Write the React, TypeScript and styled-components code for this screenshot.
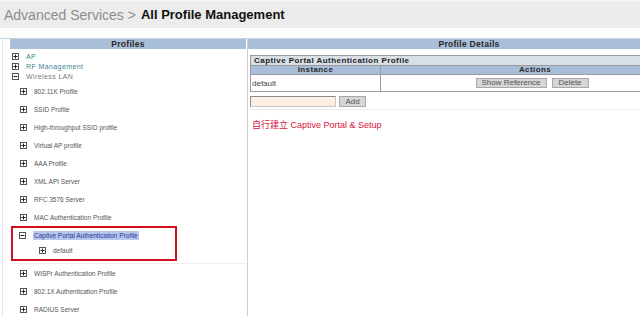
import React from 'react';
import styled, { createGlobalStyle } from 'styled-components';

const GlobalStyle = createGlobalStyle`
    html, body {
        margin: 0;
        padding: 0;
        background: #fff;
        overflow: hidden;
    }
    body {
        width: 640px;
        height: 316px;
        font-family: "Liberation Sans", Arial, sans-serif;
    }
`;

const Page = styled.div`
    width: 640px;
    height: 316px;
    overflow: hidden;
`;

const TitleBar = styled.header`
    height: 27px;
    background: #ececec;
    border-top: 1px solid #f4f4f4;
    display: flex;
    align-items: center;
    padding-left: 4px;
    white-space: nowrap;
`;

const Crumb = styled.span`
    font-size: 14px;
    color: #8c8c8c;
    margin-right: 5px;
`;

const Current = styled.span`
    font-size: 13px;
    font-weight: bold;
    color: #111;
`;

const Content = styled.div`
    padding-top: 10px;
    background: #fdfdfb;
`;

const Columns = styled.div`
    display: grid;
    grid-template-columns: 247px 393px;
    border-top: 1px solid #c8d4dc;
    background: #fff;
    height: 277px;
`;

const LeftPanel = styled.section`
    margin-left: 2px;
    border-left: 1px solid #e2e2e2;
    padding: 0 1px 0 7px;
`;

// the details panel is wider than the window, the page cuts it off on the right
const RightPanel = styled.section`
    border-left: 1px solid #cfcfcf;
    overflow: hidden;
`;

const PanelHeader = styled.div<{ $width?: number }>`
    width: ${p => (p.$width ? `${p.$width}px` : 'auto')};
    height: 10px;
    line-height: 10px;
    background: #a9bed8;
    color: #2a2a2a;
    font-size: 8.5px;
    font-weight: bold;
    letter-spacing: 0.3px;
    text-align: center;
`;

const Tree = styled.ul`
    list-style: none;
    margin: 0;
    padding: 2px 0 0;
`;

const Row = styled.li<{ $indent: number; $height: number }>`
    display: flex;
    align-items: center;
    gap: 7px;
    height: ${p => p.$height}px;
    padding-left: ${p => p.$indent}px;
    font-size: 6.5px;
    white-space: nowrap;
`;

const Label = styled.span<{ $tone: 'link' | 'muted' | 'plain' | 'selected' }>`
    color: ${p =>
        p.$tone === 'link' ? '#3c8492' :
        p.$tone === 'muted' ? '#7a7a7a' :
        p.$tone === 'selected' ? '#24369a' : '#555'};
    background: ${p => (p.$tone === 'selected' ? '#b9c7ec' : 'transparent')};
    padding: ${p => (p.$tone === 'selected' ? '1px 1px' : '0')};
    font-size: ${p => (p.$tone === 'link' || p.$tone === 'muted' ? 7 : 6.5)}px;
    letter-spacing: ${p => (p.$tone === 'link' || p.$tone === 'muted' ? 0.4 : 0)}px;
`;

const Callout = styled.div`
    width: 166px;
    box-sizing: border-box;
    margin: 0 0 2px 1px;
    border: 2px solid #d10f1f;
    padding-left: 6px;
`;

const GroupLine = styled.li`
    border-bottom: 1px solid #eeeeee;
`;

const Nested = styled.ul`
    list-style: none;
    margin: 0;
    padding: 0;
`;

const Toggle = ({ open }: { open: boolean }) => (
    <svg width="7" height="7" viewBox="0 0 7 7">
        <rect x="0.5" y="0.5" width="6" height="6" fill="#fff" stroke="#555" />
        <line x1="1.5" y1="3.5" x2="5.5" y2="3.5" stroke="#222" />
        {!open && <line x1="3.5" y1="1.5" x2="3.5" y2="5.5" stroke="#222" />}
    </svg>
);

const Details = styled.div`
    padding: 6px 0 0 2px;
`;

const ProfileTable = styled.table`
    width: 440px;
    border-collapse: collapse;
    font-size: 8px;
    color: #333;
`;

const Caption = styled.th`
    background: #d8dfe7;
    border: 1px solid #9a9a9a;
    height: 9px;
    padding: 0 3px;
    text-align: left;
    font-size: 8px;
    letter-spacing: 0.45px;
    color: #222;
    line-height: 9px;
`;

const HeadCell = styled.th<{ $width?: number }>`
    background: #a9bed8;
    border: 1px solid #9a9a9a;
    height: 8px;
    padding: 0;
    line-height: 8px;
    font-size: 8px;
    letter-spacing: 0.4px;
    color: #2a2a2a;
    width: ${p => (p.$width ? `${p.$width}px` : 'auto')};
`;

const Cell = styled.td<{ $center?: boolean }>`
    border: 1px solid #9a9a9a;
    height: 16px;
    padding: 0 1px;
    text-align: ${p => (p.$center ? 'center' : 'left')};
    color: #444;
`;

const Actions = styled.div`
    display: inline-flex;
    gap: 5px;
    margin-left: -6px;
`;

const Button = styled.button<{ $width: number; $height?: number }>`
    width: ${p => p.$width}px;
    height: ${p => p.$height ?? 10}px;
    padding: 0;
    font-family: "Liberation Sans", Arial, sans-serif;
    font-size: 8px;
    line-height: 8px;
    color: #555;
    background: #d6d6d6;
    border: 1px solid #a8a8a8;
    border-radius: 0;
`;

const AddRow = styled.div`
    display: flex;
    align-items: center;
    gap: 3px;
    padding: 4px 0 2px;
    border-bottom: 1px solid #eeeeee;
    width: 440px;
`;

const NameInput = styled.input`
    width: 86px;
    height: 11px;
    box-sizing: border-box;
    background: #fdeee2;
    border: 1px solid #8a8a8a;
    border-right-color: #c8c8c8;
    border-bottom-color: #c8c8c8;
    padding: 0;
`;

const Note = styled.p`
    margin: 8px 0 0 2px;
    font-size: 9px;
    color: #d4163a;
    font-family: "Liberation Sans", "Noto Sans CJK TC", sans-serif;
`;

type Tone = 'link' | 'muted' | 'plain' | 'selected';
type Item = { label: string; open?: boolean; tone: Tone };

const topItems: Item[] = [
    { label: 'AP', tone: 'link' },
    { label: 'RF Management', tone: 'link' },
    { label: 'Wireless LAN', open: true, tone: 'muted' },
];

const wlanItems: Item[] = [
    '802.11K Profile', 'SSID Profile', 'High-throughput SSID profile', 'Virtual AP profile',
    'AAA Profile', 'XML API Server', 'RFC 3576 Server', 'MAC Authentication Profile',
].map(label => ({ label, tone: 'plain' as const }));

const afterItems: Item[] = [
    'WISPr Authentication Profile', '802.1X Authentication Profile', 'RADIUS Server',
].map(label => ({ label, tone: 'plain' as const }));

const TreeRow = ({ item, height, indent }: { item: Item; height: number; indent: number }) => (
    <Row $indent={indent} $height={height}>
        <Toggle open={!!item.open} />
        <Label $tone={item.tone}>{item.label}</Label>
    </Row>
);

export default function App() {
    return (
        <Page>
            <GlobalStyle />
            <TitleBar>
                <Crumb>Advanced Services &gt;</Crumb>
                <Current>All Profile Management</Current>
            </TitleBar>
            <Content>
                <Columns>
                    <LeftPanel>
                        <PanelHeader>Profiles</PanelHeader>
                        <Tree>
                            {topItems.map(item => <TreeRow key={item.label} item={item} height={10} indent={2} />)}
                            <li style={{ height: 1 }} />
                            {wlanItems.map(item => <TreeRow key={item.label} item={item} height={18} indent={10} />)}
                            <GroupLine>
                                <Callout>
                                    <Nested>
                                        <TreeRow item={{ label: 'Captive Portal Authentication Profile', open: true, tone: 'selected' }} height={14} indent={0} />
                                        <TreeRow item={{ label: 'default', tone: 'plain' }} height={17} indent={20} />
                                    </Nested>
                                </Callout>
                            </GroupLine>
                            {afterItems.map(item => <TreeRow key={item.label} item={item} height={18} indent={10} />)}
                        </Tree>
                    </LeftPanel>
                    <RightPanel>
                        <PanelHeader $width={442}>Profile Details</PanelHeader>
                        <Details>
                            <ProfileTable>
                                <thead>
                                    <tr><Caption colSpan={2}>Captive Portal Authentication Profile</Caption></tr>
                                    <tr>
                                        <HeadCell $width={129}>Instance</HeadCell>
                                        <HeadCell>Actions</HeadCell>
                                    </tr>
                                </thead>
                                <tbody>
                                    <tr>
                                        <Cell>default</Cell>
                                        <Cell $center>
                                            <Actions>
                                                <Button $width={71}>Show Reference</Button>
                                                <Button $width={37}>Delete</Button>
                                            </Actions>
                                        </Cell>
                                    </tr>
                                </tbody>
                            </ProfileTable>
                            <AddRow>
                                <NameInput type="text" />
                                <Button $width={27} $height={11}>Add</Button>
                            </AddRow>
                            <Note>自行建立 Captive Portal &amp; Setup</Note>
                        </Details>
                    </RightPanel>
                </Columns>
            </Content>
        </Page>
    );
}
